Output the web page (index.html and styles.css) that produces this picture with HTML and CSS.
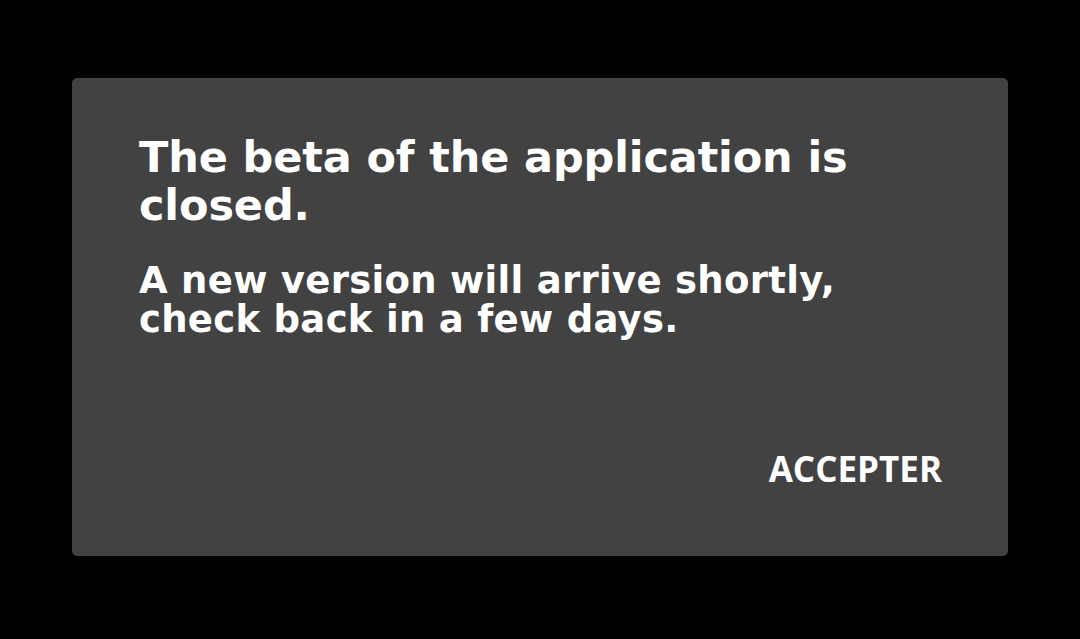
FILE: index.html
```html
<!DOCTYPE html>
<html>
<head>
<meta charset="utf-8">
<link rel="stylesheet" href="styles.css">
</head>
<body>
<div class="screen">
  <div class="dialog">
    <div class="content">
      <h1 class="title">The beta of the application is closed.</h1>
      <p class="message">A new version will arrive shortly, check back in a few days.</p>
    </div>
    <div class="actions">
      <button class="btn">ACCEPTER</button>
    </div>
  </div>
</div>
</body>
</html>
```

FILE: styles.css
```css
html, body {
  margin: 0;
  padding: 0;
  background: #000;
  width: 1080px;
  height: 639px;
  overflow: hidden;
}
.screen {
  padding: 78px 72px 0 72px;
}
.dialog {
  width: 936px;
  height: 478px;
  box-sizing: border-box;
  background: #424242;
  border-radius: 5px;
  padding: 55px 66px 0 67px;
  display: flex;
  flex-direction: column;
}
.content {
  flex: 1;
  color: #fff;
  font-family: "DejaVu Sans", sans-serif;
  font-weight: bold;
}
.title {
  margin: 0;
  font-size: 43px;
  line-height: 48px;
  letter-spacing: -0.13px;
  width: 760px;
}
.message {
  margin: 32px 0 0 0;
  font-size: 37px;
  line-height: 39px;
  letter-spacing: 0.3px;
  width: 760px;
}
.actions {
  display: flex;
  justify-content: flex-end;
  padding-bottom: 67px;
}
.btn {
  background: none;
  border: 0;
  padding: 0;
  color: #fff;
  font-family: "Open Sans", sans-serif;
  font-weight: bold;
  font-size: 35px;
  line-height: 40px;
  letter-spacing: 0;
}
```
